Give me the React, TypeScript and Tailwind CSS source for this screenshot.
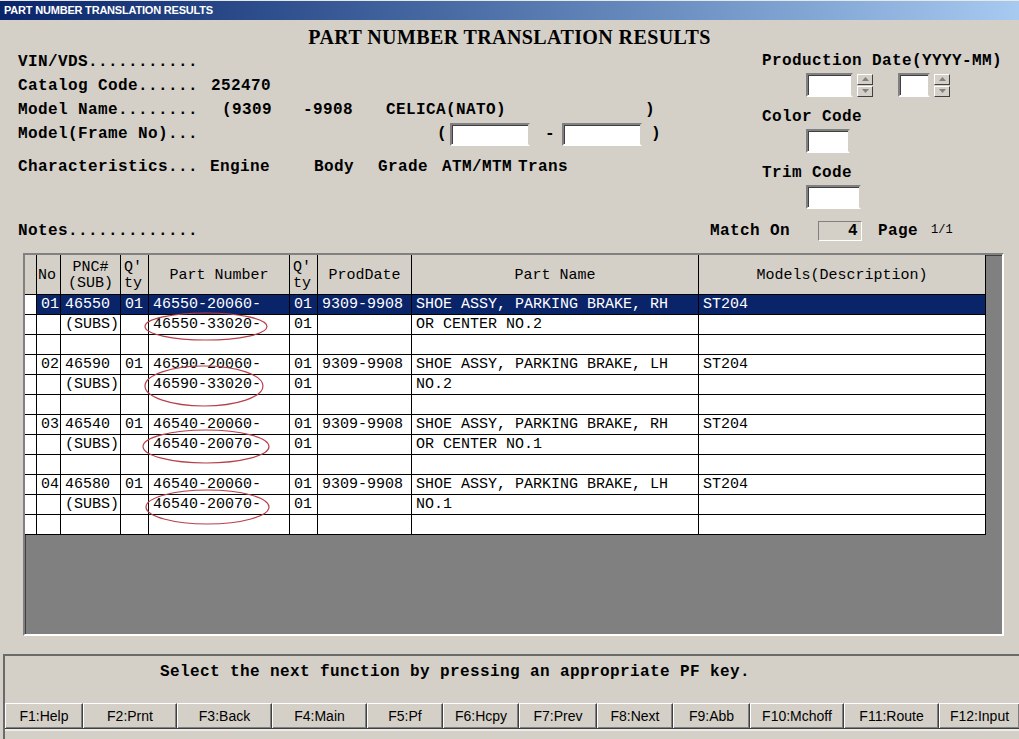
import React from "react";

type Row = {
  no?: string
  pnc?: string
  qty?: string
  part?: string
  qty2?: string
  date?: string
  name?: string
  model?: string
  selected?: boolean
}

const rows: Row[] = [
  { no: "01", pnc: "46550", qty: "01", part: "46550-20060-", qty2: "01", date: "9309-9908", name: "SHOE ASSY, PARKING BRAKE, RH", model: "ST204", selected: true },
  { pnc: "(SUBS)", part: "46550-33020-", qty2: "01", name: "OR CENTER NO.2" },
  {},
  { no: "02", pnc: "46590", qty: "01", part: "46590-20060-", qty2: "01", date: "9309-9908", name: "SHOE ASSY, PARKING BRAKE, LH", model: "ST204" },
  { pnc: "(SUBS)", part: "46590-33020-", qty2: "01", name: "NO.2" },
  {},
  { no: "03", pnc: "46540", qty: "01", part: "46540-20060-", qty2: "01", date: "9309-9908", name: "SHOE ASSY, PARKING BRAKE, RH", model: "ST204" },
  { pnc: "(SUBS)", part: "46540-20070-", qty2: "01", name: "OR CENTER NO.1" },
  {},
  { no: "04", pnc: "46580", qty: "01", part: "46540-20060-", qty2: "01", date: "9309-9908", name: "SHOE ASSY, PARKING BRAKE, LH", model: "ST204" },
  { pnc: "(SUBS)", part: "46540-20070-", qty2: "01", name: "NO.1" },
  {},
]

const keys = [
  { label: "F1:Help", w: "w-[78px]" },
  { label: "F2:Prnt", w: "w-[94px]" },
  { label: "F3:Back", w: "w-[95px]" },
  { label: "F4:Main", w: "w-[95px]" },
  { label: "F5:Pf", w: "w-[76px]" },
  { label: "F6:Hcpy", w: "w-[76px]" },
  { label: "F7:Prev", w: "w-[78px]" },
  { label: "F8:Next", w: "w-[76px]" },
  { label: "F9:Abb", w: "w-[77px]" },
  { label: "F10:Mchoff", w: "w-[94px]" },
  { label: "F11:Route", w: "w-[95px]" },
  { label: "F12:Input", w: "w-[81px]" },
]

const Field = ({ className }: { className: string }) => (
  <div className={`bg-white border-2 border-t-[#808080] border-l-[#808080] border-b-white border-r-[#d4d0c8] shadow-[inset_1px_1px_0_#404040] ${className}`} />
)

const SpinBtn = ({ up }: { up?: boolean }) => (
  <div className="w-[16px] h-[11px] bg-[#d4d0c8] border border-t-white border-l-white border-b-[#404040] border-r-[#404040] flex items-center justify-center">
    <svg width="7" height="4" viewBox="0 0 7 4">
      <polygon points={up ? "3.5,0 7,4 0,4" : "0,0 7,0 3.5,4"} fill="#808080" />
    </svg>
  </div>
)

const Spinner = () => (
  <div className="flex flex-col gap-[1px] ml-[4px]">
    <SpinBtn up />
    <SpinBtn />
  </div>
)

const cell = "border-r border-b border-black h-[20px] leading-[20px] pl-[4px] whitespace-pre overflow-hidden"

const App = () => {
  return (
    <div className="w-[1019px] h-[739px] bg-[#d4d0c8] overflow-hidden flex flex-col font-['Liberation_Mono',monospace] text-black">
      <div className="h-[20px] shrink-0 bg-linear-to-r from-[#0a246a] to-[#a6caf0] border-t border-[#e8e8e8] pl-[4px] leading-[18px] text-white font-bold text-[11px] tracking-[-0.2px] font-['Liberation_Sans',Arial,sans-serif]">
        PART NUMBER TRANSLATION RESULTS
      </div>

      <div className="h-[30px] shrink-0 pt-[5px] leading-[24px] text-center font-bold text-[20px] tracking-[0.4px] font-['Liberation_Serif',serif]">
        PART NUMBER TRANSLATION RESULTS
      </div>

      <div className="flex font-bold text-[16px] tracking-[0.4px]">
        <div className="w-[762px] shrink-0 pl-[18px] flex flex-col">
          <div className="h-[24px] leading-[24px]">VIN/VDS...........</div>
          <div className="h-[24px] leading-[24px] flex">
            <span className="w-[193px] shrink-0">Catalog Code......</span>
            <span>252470</span>
          </div>
          <div className="h-[24px] leading-[24px] flex whitespace-pre">
            <span className="w-[204px] shrink-0">Model Name........</span>
            <span className="w-[81px] shrink-0">(9309</span>
            <span className="w-[83px] shrink-0">-9908</span>
            <span className="w-[259px] shrink-0">CELICA(NATO)</span>
            <span>)</span>
          </div>
          <div className="h-[24px] flex items-center">
            <span className="w-[419px] shrink-0">Model(Frame No)...</span>
            <span className="w-[13px] shrink-0">(</span>
            <Field className="w-[80px] h-[23px]" />
            <span className="w-[32px] shrink-0 pl-[15px]">-</span>
            <Field className="w-[80px] h-[23px]" />
            <span className="pl-[9px]">)</span>
          </div>
          <div className="h-[24px] leading-[24px] flex mt-[9px]">
            <span className="w-[192px] shrink-0">Characteristics...</span>
            <span className="w-[104px] shrink-0">Engine</span>
            <span className="w-[64px] shrink-0">Body</span>
            <span className="w-[64px] shrink-0">Grade</span>
            <span className="w-[76px] shrink-0">ATM/MTM</span>
            <span>Trans</span>
          </div>
        </div>

        <div className="flex flex-col pt-[1px]">
          <div className="h-[20px] leading-[20px]">Production Date(YYYY-MM)</div>
          <div className="mt-[2px] pl-[44px] flex items-center">
            <Field className="w-[47px] h-[24px]" />
            <Spinner />
            <Field className="w-[32px] h-[24px] ml-[25px]" />
            <Spinner />
          </div>
          <div className="h-[20px] leading-[20px] mt-[10px]">Color Code</div>
          <Field className="w-[44px] h-[24px] ml-[44px] mt-[2px]" />
          <div className="h-[20px] leading-[20px] mt-[10px]">Trim Code</div>
          <Field className="w-[55px] h-[24px] ml-[44px] mt-[2px]" />
        </div>
      </div>

      <div className="mt-[10px] h-[24px] flex items-center pl-[18px] font-bold text-[16px] tracking-[0.4px]">
        <span className="w-[692px] shrink-0">Notes.............</span>
        <span className="w-[108px] shrink-0">Match On</span>
        <div className="w-[44px] h-[20px] border border-t-[#808080] border-l-[#808080] border-b-white border-r-white flex items-center justify-end pr-[3px] leading-none">
          4
        </div>
        <span className="ml-[16px] w-[53px] shrink-0">Page</span>
        <span className="text-[12px] font-normal tracking-normal mb-[3px]">1/1</span>
      </div>

      <div className="mt-[10px] ml-[23px] w-[981px] h-[383px] shrink-0 bg-[#808080] border-2 border-t-[#808080] border-l-[#808080] border-b-white border-r-white shadow-[inset_1px_1px_0_#404040]">
        <div className="relative w-[961px] text-[15px]">
          <div className="grid grid-cols-[12px_24px_60px_28px_141px_28px_94px_287px_287px] bg-[#d4d0c8] h-[40px] leading-[16px]">
            <div className="border-r border-b border-black" />
            <div className="border-r border-b border-black flex items-center pl-[1px] pt-[2px]">No</div>
            <div className="border-r border-b border-black flex flex-col items-center justify-center pt-[2px]">
              <span>PNC#</span>
              <span>(SUB)</span>
            </div>
            <div className="border-r border-b border-black flex flex-col justify-center pl-[3px] pt-[2px]">
              <span>Q'</span>
              <span>ty</span>
            </div>
            <div className="border-r border-b border-black flex items-center justify-center pt-[2px]">Part Number</div>
            <div className="border-r border-b border-black flex flex-col justify-center pl-[3px] pt-[2px]">
              <span>Q'</span>
              <span>ty</span>
            </div>
            <div className="border-r border-b border-black flex items-center justify-center pt-[2px]">ProdDate</div>
            <div className="border-r border-b border-black flex items-center justify-center pt-[2px]">Part Name</div>
            <div className="border-r border-b border-black flex items-center justify-center pt-[2px]">Models(Description)</div>
          </div>

          {rows.map((r, i) => {
            const bg = r.selected ? "bg-[#0a246a] text-white" : "bg-white"
            return (
              <div key={i} className="grid grid-cols-[12px_24px_60px_28px_141px_28px_94px_287px_287px]">
                <div className={`${cell} bg-white`} />
                <div className={`${cell} ${bg} pl-[2px]`}>{r.no}</div>
                <div className={`${cell} ${bg}`}>{r.pnc}</div>
                <div className={`${cell} ${bg}`}>{r.qty}</div>
                <div className={`${cell} ${bg}`}>{r.part}</div>
                <div className={`${cell} ${bg} pl-[3px]`}>{r.qty2}</div>
                <div className={`${cell} ${bg} pl-[3px]`}>{r.date}</div>
                <div className={`${cell} ${bg} pl-[3px]`}>{r.name}</div>
                <div className={`${cell} ${bg} pl-[3px]`}>{r.model}</div>
              </div>
            )
          })}

          <svg className="absolute inset-0 pointer-events-none" width="961" height="300">
            <g fill="none" stroke="#b8404a" strokeWidth="1.2">
              <ellipse cx="181" cy="71.5" rx="61" ry="13.5" />
              <ellipse cx="179" cy="131" rx="59" ry="20" />
              <ellipse cx="181" cy="191.5" rx="63" ry="16.5" />
              <ellipse cx="182.5" cy="252" rx="61.5" ry="17" />
            </g>
          </svg>
        </div>
      </div>

      <div className="mt-[18px] ml-[3px] flex-1 flex flex-col border-t-2 border-l-2 border-t-[#6a6a6a] border-l-[#6a6a6a]">
        <div className="pt-[6px] h-[26px] leading-[20px] pl-[155px] font-bold text-[16px] tracking-[0.4px]">
          Select the next function by pressing an appropriate PF key.
        </div>
        <div className="mt-[21px] flex border-b border-[#404040] font-['Liberation_Sans',Arial,sans-serif] text-[14px]">
          {keys.map((k) => (
            <div
              key={k.label}
              className={`${k.w} h-[25px] shrink-0 flex items-center justify-center border-t border-l border-t-white border-l-white border-r border-r-[#404040] shadow-[inset_-1px_-1px_0_#808080]`}
            >
              {k.label}
            </div>
          ))}
        </div>
        <div className="h-[2px] bg-white/60" />
      </div>
    </div>
  )
}

export default App
